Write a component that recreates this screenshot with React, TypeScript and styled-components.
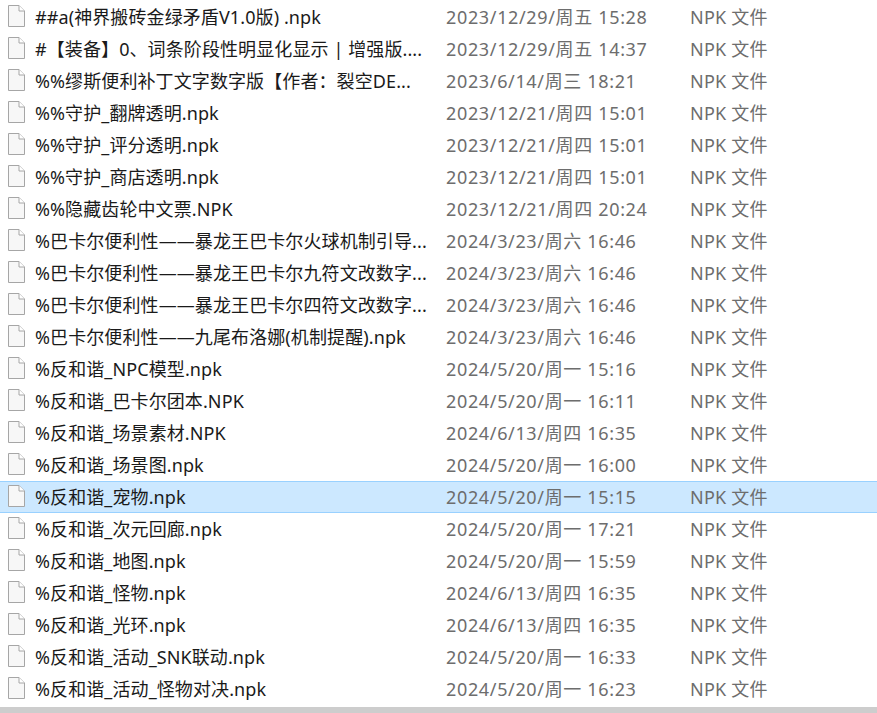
import * as React from 'react';
import styled, { createGlobalStyle } from 'styled-components';

const GlobalStyle = createGlobalStyle`
  html, body {
    margin: 0;
    padding: 0;
    background: #fff;
    overflow: hidden;
  }
`;

const Wrapper = styled.div`
  width: 877px;
  height: 713px;
  display: flex;
  flex-direction: column;
  padding-top: 1px;
  box-sizing: border-box;
  font-family: 'Noto Sans', 'Noto Sans CJK SC', sans-serif;
  font-size: 18px;
`;

const List = styled.div`
  flex: 1;
  overflow: hidden;
`;

const Row = styled.div<{ $selected?: boolean }>`
  display: grid;
  grid-template-columns: 36px 410px 244px 1fr;
  align-items: center;
  height: 32px;
  box-sizing: border-box;
  padding-bottom: 2px;
  background: ${p => (p.$selected ? '#cce8ff' : '#fff')};
  border-top: 1px solid ${p => (p.$selected ? '#99d1ff' : 'transparent')};
  border-bottom: 1px solid ${p => (p.$selected ? '#99d1ff' : 'transparent')};
`;

const IconCell = styled.div`
  display: flex;
  justify-content: flex-end;
  padding-right: 11px;
`;

const Name = styled.div`
  color: #1a1a1a;
  white-space: nowrap;
  overflow: hidden;
  margin-left: -1px;
  letter-spacing: 0.1px;
`;

const DateText = styled.div`
  color: #6d6d6d;
  white-space: nowrap;
  letter-spacing: 0.65px;
`;

const TypeText = styled.div`
  color: #6d6d6d;
  white-space: nowrap;
  letter-spacing: 0.2px;
`;

const ScrollTrack = styled.div`
  height: 6px;
  background: #cdcdcd;
  flex-shrink: 0;
`;

const FileIcon = () => (
  <svg width="17" height="22" viewBox="0 0 17 22">
    <path d="M0.5 0.5H11L16.5 6V21.5H0.5Z" fill="#f7f7f7" stroke="#a6a6a6" />
    <path d="M11 0.5V6H16.5" fill="#fff" stroke="#a6a6a6" />
  </svg>
);

const files = [
  ['##a(神界搬砖金绿矛盾V1.0版) .npk', '2023/12/29/周五 15:28'],
  ['#【装备】0、词条阶段性明显化显示 | 增强版....', '2023/12/29/周五 14:37'],
  ['%%缪斯便利补丁文字数字版【作者：裂空DE...', '2023/6/14/周三 18:21'],
  ['%%守护_翻牌透明.npk', '2023/12/21/周四 15:01'],
  ['%%守护_评分透明.npk', '2023/12/21/周四 15:01'],
  ['%%守护_商店透明.npk', '2023/12/21/周四 15:01'],
  ['%%隐藏齿轮中文票.NPK', '2023/12/21/周四 20:24'],
  ['%巴卡尔便利性——暴龙王巴卡尔火球机制引导...', '2024/3/23/周六 16:46'],
  ['%巴卡尔便利性——暴龙王巴卡尔九符文改数字...', '2024/3/23/周六 16:46'],
  ['%巴卡尔便利性——暴龙王巴卡尔四符文改数字...', '2024/3/23/周六 16:46'],
  ['%巴卡尔便利性——九尾布洛娜(机制提醒).npk', '2024/3/23/周六 16:46'],
  ['%反和谐_NPC模型.npk', '2024/5/20/周一 15:16'],
  ['%反和谐_巴卡尔团本.NPK', '2024/5/20/周一 16:11'],
  ['%反和谐_场景素材.NPK', '2024/6/13/周四 16:35'],
  ['%反和谐_场景图.npk', '2024/5/20/周一 16:00'],
  ['%反和谐_宠物.npk', '2024/5/20/周一 15:15'],
  ['%反和谐_次元回廊.npk', '2024/5/20/周一 17:21'],
  ['%反和谐_地图.npk', '2024/5/20/周一 15:59'],
  ['%反和谐_怪物.npk', '2024/6/13/周四 16:35'],
  ['%反和谐_光环.npk', '2024/6/13/周四 16:35'],
  ['%反和谐_活动_SNK联动.npk', '2024/5/20/周一 16:33'],
  ['%反和谐_活动_怪物对决.npk', '2024/5/20/周一 16:23'],
];

const App: React.FC = () => (
  <Wrapper>
    <GlobalStyle />
    <List>
      {files.map(([name, date], i) => (
        <Row key={name} $selected={i === 15}>
          <IconCell>
            <FileIcon />
          </IconCell>
          <Name>{name}</Name>
          <DateText>{date}</DateText>
          <TypeText>NPK 文件</TypeText>
        </Row>
      ))}
    </List>
    <ScrollTrack />
  </Wrapper>
);

export default App;
